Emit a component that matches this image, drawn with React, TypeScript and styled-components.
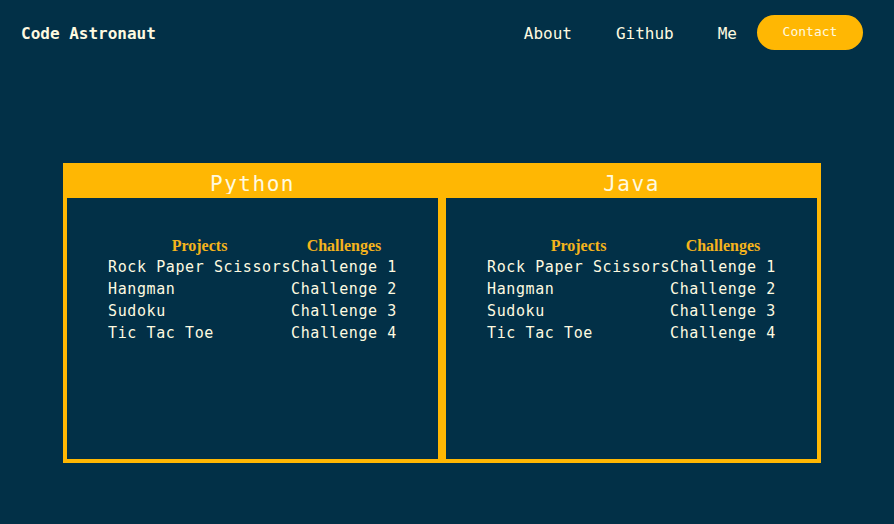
import React from "react";
import styled, { createGlobalStyle } from "styled-components";

const GlobalStyle = createGlobalStyle`
  html, body {
    margin: 0;
    padding: 0;
    background: #023047;
  }
  body {
    font-family: "DejaVu Sans Mono", "Liberation Mono", monospace;
    color: #fefae0;
  }
`;

const Page = styled.div`
  min-height: 524px;
  background: #023047;
`;

const Nav = styled.nav`
  display: flex;
  align-items: center;
  justify-content: space-between;
  height: 64px;
  padding: 0 31px 0 21px;
  box-sizing: border-box;
`;

const Brand = styled.div`
  font-size: 16px;
  font-weight: bold;
  color: #fefae0;
  padding-top: 2px;
`;

const NavList = styled.div`
  display: flex;
  align-items: center;
`;

const NavLink = styled.a`
  font-size: 16px;
  color: #fefae0;
  padding: 2px 22px 0;
  text-decoration: none;
`;

const ContactButton = styled.button`
  margin-left: -2px;
  width: 106px;
  height: 35px;
  border: none;
  border-radius: 18px;
  background: #ffb703;
  color: #fefae0;
  font-family: "DejaVu Sans Mono", "Liberation Mono", monospace;
  font-size: 13px;
  padding: 0 0 1px;
`;

const Board = styled.main`
  display: grid;
  grid-template-columns: 1fr 1fr;
  width: 758px;
  margin: 99px 0 0 63px;
  background: #ffb703;
`;

const Column = styled.section`
  display: flex;
  flex-direction: column;
`;

const ColumnTitle = styled.h2`
  margin: 0;
  height: 31px;
  padding-top: 9px;
  box-sizing: border-box;
  text-align: center;
  font-size: 21px;
  line-height: 24px;
  letter-spacing: 1.5px;
  font-weight: normal;
  color: #fefae0;
`;

const Panel = styled.div`
  height: 269px;
  box-sizing: border-box;
  border: 4px solid #ffb703;
  background: #023047;
  padding-top: 36px;
  display: flex;
  justify-content: center;
  align-items: flex-start;
`;

const Table = styled.div`
  display: grid;
  grid-template-columns: auto auto;
  grid-auto-rows: 22px;
  align-items: center;
`;

const HeadCell = styled.div`
  font-family: "Liberation Serif", "Times New Roman", serif;
  font-weight: bold;
  font-size: 16px;
  color: #f5b41c;
  text-align: center;
  padding-top: 1px;
`;

const Cell = styled.div`
  font-size: 15px;
  letter-spacing: 0.6px;
  color: #fefae0;
  white-space: pre;
`;

const projects = ["Rock Paper Scissors", "Hangman", "Sudoku", "Tic Tac Toe"];
const challenges = ["Challenge 1", "Challenge 2", "Challenge 3", "Challenge 4"];

function LanguageColumn({ title }: { title: string }) {
  return (
    <Column>
      <ColumnTitle>{title}</ColumnTitle>
      <Panel>
        <Table>
          <HeadCell>Projects</HeadCell>
          <HeadCell>Challenges</HeadCell>
          {projects.map((p, i) => (
            <React.Fragment key={p}>
              <Cell>{p}</Cell>
              <Cell>{challenges[i]}</Cell>
            </React.Fragment>
          ))}
        </Table>
      </Panel>
    </Column>
  );
}

export default function App() {
  return (
    <Page>
      <GlobalStyle />
      <Nav>
        <Brand>Code Astronaut</Brand>
        <NavList>
          <NavLink>About</NavLink>
          <NavLink>Github</NavLink>
          <NavLink>Me</NavLink>
          <ContactButton>Contact</ContactButton>
        </NavList>
      </Nav>
      <Board>
        <LanguageColumn title="Python" />
        <LanguageColumn title="Java" />
      </Board>
    </Page>
  );
}
